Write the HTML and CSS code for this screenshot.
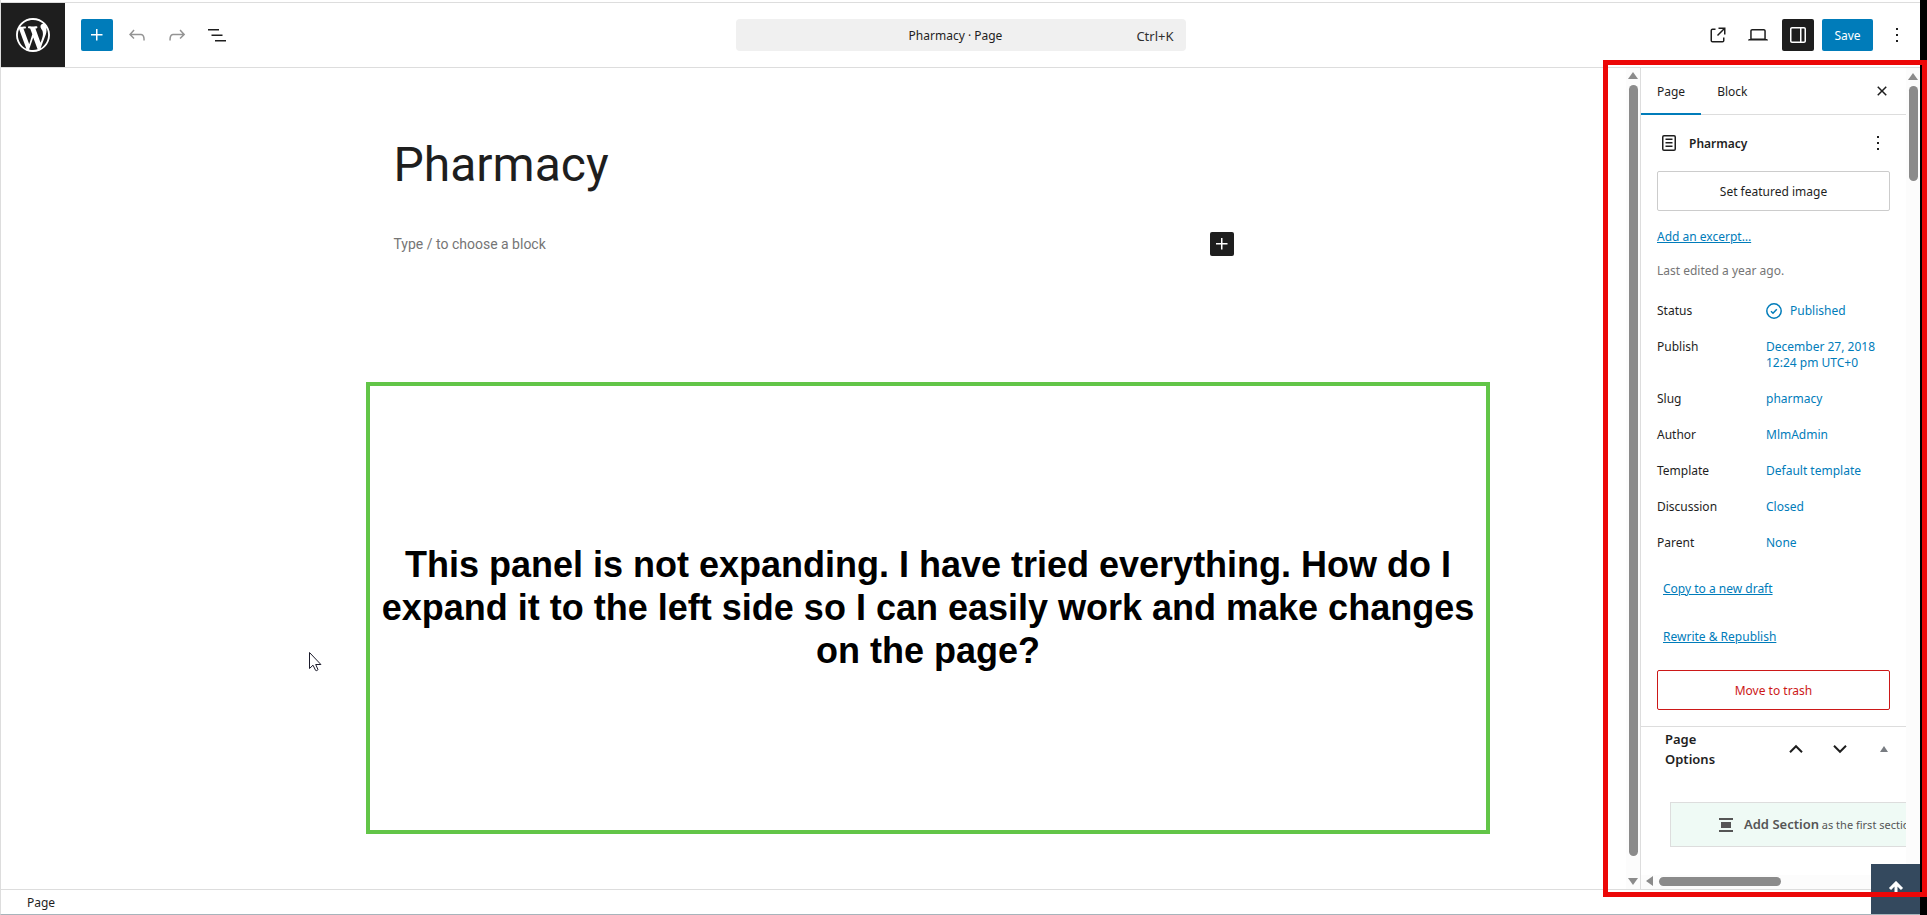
FILE: index.html
```html
<!DOCTYPE html>
<html lang="en">
<head>
    <meta charset="UTF-8">
    <meta name="viewport" content="width=device-width, initial-scale=1.0">
    <title>Pharmacy - Page</title>
    <link rel="stylesheet" href="styles.css">
</head>
<body>
    <div class="editor">
        <header class="header">
            <div class="header-left">
                <a href="#" class="logo" aria-label="View Pages">
                    <svg width="34" height="34" viewBox="0 0 20 20"><path d="M20 10c0-5.51-4.49-10-10-10C4.48 0 0 4.49 0 10c0 5.52 4.48 10 10 10 5.51 0 10-4.48 10-10zM7.78 15.37L4.37 6.22c.55-.02 1.17-.08 1.17-.08.5-.06.44-1.13-.06-1.11 0 0-1.45.11-2.37.11-.18 0-.37 0-.58-.01C4.12 2.69 6.87 1.11 10 1.11c2.33 0 4.45.87 6.05 2.34-.68-.11-1.65.39-1.65 1.58 0 .74.45 1.36.9 2.1.35.61.55 1.36.55 2.46 0 1.49-1.4 5-1.4 5l-3.03-8.37c.54-.02.82-.17.82-.17.5-.05.44-1.25-.06-1.22 0 0-1.44.12-2.38.12-.87 0-2.33-.12-2.33-.12-.5-.03-.56 1.2-.06 1.22l.92.08 1.26 3.41zM17.41 10c.24-.64.74-1.87.43-4.25.7 1.29 1.05 2.71 1.05 4.25 0 3.29-1.73 6.24-4.4 7.78.97-2.59 1.94-5.2 2.92-7.78zM6.1 18.09C3.12 16.65 1.11 13.53 1.11 10c0-1.3.23-2.48.72-3.59C3.25 10.3 4.67 14.2 6.1 18.09zm4.03-6.63l2.58 6.98c-.86.29-1.76.45-2.71.45-.79 0-1.57-.11-2.29-.33.81-2.38 1.62-4.74 2.42-7.1z"/></svg>
                </a>
                <div class="tools">
                    <button type="button" class="icon-btn primary" aria-label="Block inserter">
                        <svg width="24" height="24" viewBox="0 0 24 24"><path d="M11 12.5V17.5H12.5V12.5H17.5V11H12.5V6H11V11H6V12.5H11Z"/></svg>
                    </button>
                    <button type="button" class="icon-btn off" aria-label="Undo">
                        <svg width="24" height="24" viewBox="0 0 24 24"><path d="M18.3 11.7c-.6-.6-1.4-.9-2.3-.9H6.7l2.9-3.3-1.1-1-4.5 5L8.5 16l1-1-2.7-2.7H16c.5 0 .9.2 1.3.5 1 1 1 3.4 1 4.5v.3h1.5v-.2c0-1.5 0-4.3-1.5-5.7z"/></svg>
                    </button>
                    <button type="button" class="icon-btn off" aria-label="Redo">
                        <svg width="24" height="24" viewBox="0 0 24 24"><path d="M15.6 6.5l-1.1 1 2.9 3.3H8c-.9 0-1.7.3-2.3.9-1.4 1.5-1.4 4.2-1.4 5.6v.2h1.5v-.3c0-1.1 0-3.5 1-4.5.3-.3.7-.5 1.3-.5h9.2L14.5 15l1.1 1.1 4.6-4.6-4.6-5z"/></svg>
                    </button>
                    <button type="button" class="icon-btn" aria-label="Document overview">
                        <svg width="24" height="24" viewBox="0 0 24 24"><path d="M3 6h11v1.5H3V6Zm3.5 5.5h11V13h-11v-1.5ZM21 17H10v1.5h11V17Z"/></svg>
                    </button>
                </div>
            </div>
            <button type="button" class="command-bar">
                <span class="command-title">Pharmacy · Page</span>
                <span class="command-key">Ctrl+K</span>
            </button>
            <div class="header-right">
                <a href="#" class="icon-btn" aria-label="View page">
                    <svg width="24" height="24" viewBox="0 0 24 24"><path d="M19.5 4.5h-7V6h4.44l-5.97 5.97 1.06 1.06L18 7.06v4.44h1.5v-7Zm-13 1a2 2 0 0 0-2 2v10a2 2 0 0 0 2 2h10a2 2 0 0 0 2-2v-3H17v3a.5.5 0 0 1-.5.5h-10a.5.5 0 0 1-.5-.5v-10a.5.5 0 0 1 .5-.5h3V5.5h-3Z"/></svg>
                </a>
                <button type="button" class="icon-btn" aria-label="View">
                    <svg width="24" height="24" viewBox="0 0 24 24"><path d="M20.5 16h-.7V8c0-1.1-.9-2-2-2H6.2c-1.1 0-2 .9-2 2v8h-.7c-.8 0-1.5.7-1.5 1.5h20c0-.8-.7-1.5-1.5-1.5zM5.7 8c0-.3.2-.5.5-.5h11.6c.3 0 .5.2.5.5v7.6H5.7V8z"/></svg>
                </button>
                <button type="button" class="icon-btn pressed" aria-label="Settings">
                    <svg width="24" height="24" viewBox="0 0 24 24"><path d="M18 4H6c-1.1 0-2 .9-2 2v12c0 1.1.9 2 2 2h12c1.1 0 2-.9 2-2V6c0-1.1-.9-2-2-2zm-4 14.5H6c-.3 0-.5-.2-.5-.5V6c0-.3.2-.5.5-.5h8v13zm4.5-.5c0 .3-.2.5-.5.5h-2.5v-13H18c.3 0 .5.2.5.5v12z"/></svg>
                </button>
                <button type="button" class="save">Save</button>
                <button type="button" class="icon-btn" aria-label="Options">
                    <svg width="24" height="24" viewBox="0 0 24 24"><path d="M13 19h-2v-2h2v2zm0-6h-2v-2h2v2zm0-6h-2V5h2v2z"/></svg>
                </button>
            </div>
        </header>

        <div class="body">
            <main class="canvas">
                <div class="content">
                    <h1 class="post-title">Pharmacy</h1>
                    <div class="block-row">
                        <p class="placeholder">Type / to choose a block</p>
                        <button type="button" class="inserter" aria-label="Add block">
                            <svg width="24" height="24" viewBox="0 0 24 24"><path d="M11 12.5V17.5H12.5V12.5H17.5V11H12.5V6H11V11H6V12.5H11Z"/></svg>
                        </button>
                    </div>
                </div>
            </main>
            <div class="vscroll canvas-scroll">
                <i class="arrow up"></i>
                <div class="thumb"></div>
                <i class="arrow down"></i>
            </div>

            <aside class="sidebar">
                <div class="panel">
                    <div class="tabs">
                        <button type="button" class="tab active">Page</button>
                        <button type="button" class="tab">Block</button>
                        <button type="button" class="icon-btn close" aria-label="Close Settings">
                            <svg width="24" height="24" viewBox="0 0 24 24"><path d="M12 13.06l3.712 3.713 1.061-1.06L13.061 12l3.712-3.712-1.06-1.06L12 10.938 8.288 7.227l-1.061 1.06L10.939 12l-3.712 3.712 1.06 1.061L12 13.061z"/></svg>
                        </button>
                    </div>

                    <section class="summary">
                        <div class="card">
                            <svg width="24" height="24" viewBox="0 0 24 24"><path d="M15.5 7.5h-7V9h7V7.5Zm-7 3.5h7v1.5h-7V11Zm7 3.5h-7V16h7v-1.5Z"/><path d="M17 4H7a2 2 0 0 0-2 2v12a2 2 0 0 0 2 2h10a2 2 0 0 0 2-2V6a2 2 0 0 0-2-2ZM7 5.5h10a.5.5 0 0 1 .5.5v12a.5.5 0 0 1-.5.5H7a.5.5 0 0 1-.5-.5V6a.5.5 0 0 1 .5-.5Z"/></svg>
                            <h2>Pharmacy</h2>
                            <button type="button" class="card-more" aria-label="Actions">
                                <svg width="24" height="24" viewBox="0 0 24 24"><path d="M13 19h-2v-2h2v2zm0-6h-2v-2h2v2zm0-6h-2V5h2v2z"/></svg>
                            </button>
                        </div>
                        <button type="button" class="wide-btn">Set featured image</button>
                        <a href="#" class="excerpt">Add an excerpt…</a>
                        <p class="edited">Last edited a year ago.</p>
                        <dl class="rows">
                            <dt>Status</dt>
                            <dd>
                                <a href="#" class="status">
                                    <svg width="16" height="16" viewBox="0 0 16 16"><circle cx="8" cy="8" r="7.2"/><path d="M5 8.3l2 1.9 3.8-4"/></svg>
                                    Published
                                </a>
                            </dd>
                            <dt>Publish</dt>
                            <dd><a href="#">December 27, 2018<br>12:24 pm UTC+0</a></dd>
                            <dt>Slug</dt>
                            <dd><a href="#">pharmacy</a></dd>
                            <dt>Author</dt>
                            <dd><a href="#">MlmAdmin</a></dd>
                            <dt>Template</dt>
                            <dd><a href="#">Default template</a></dd>
                            <dt>Discussion</dt>
                            <dd><a href="#">Closed</a></dd>
                            <dt>Parent</dt>
                            <dd><a href="#">None</a></dd>
                        </dl>
                        <div class="links">
                            <a href="#">Copy to a new draft</a>
                            <a href="#">Rewrite &amp; Republish</a>
                        </div>
                        <button type="button" class="wide-btn danger">Move to trash</button>
                    </section>

                    <section class="metabox">
                        <div class="metabox-head">
                            <h2>Page Options</h2>
                            <button type="button" class="move" aria-label="Move up">
                                <svg width="14" height="10" viewBox="0 0 14 10"><path d="M1 8.2l6-6 6 6"/></svg>
                            </button>
                            <button type="button" class="move" aria-label="Move down">
                                <svg width="14" height="10" viewBox="0 0 14 10"><path d="M1 1.8l6 6 6-6"/></svg>
                            </button>
                            <button type="button" class="move" aria-label="Toggle panel"><i class="toggle"></i></button>
                        </div>
                        <button type="button" class="add-section">
                            <svg width="14" height="14" viewBox="0 0 14 14"><path d="M0 0h14v2H0zM2 4h10v6H2zM0 12h14v2H0z"/></svg>
                            <span><b>Add Section</b> as the first section</span>
                        </button>
                    </section>
                </div>
                <div class="vscroll side-scroll">
                    <i class="arrow up"></i>
                    <div class="thumb"></div>
                </div>
                <div class="hscroll">
                    <i class="arrow left"></i>
                    <div class="thumb"></div>
                </div>
            </aside>
        </div>

        <footer class="footer">Page</footer>

        <button type="button" class="to-top" aria-label="Back to top">
            <svg width="16" height="16" viewBox="0 0 16 16"><path d="M8 15V2M2 8l6-6 6 6"/></svg>
        </button>
    </div>

    <!-- notes drawn over the editor -->
    <div class="note">This panel is not expanding. I have tried everything. How do I expand it to the left side so I can easily work and make changes on the page?</div>
    <div class="highlight"></div>
    <svg class="cursor" width="14" height="20" viewBox="0 0 14 20"><path d="M.5.5v16l3.500-3.300 2.600 5.200c.8.600 2.400 0 2.300-1L6.700 12.500h5.200z"/></svg>
</body>
</html>
```

FILE: styles.css
```css
*{
    box-sizing: border-box;
}
body{
    margin: 0;
    height: 100vh;
    position: relative;
    background-color: #000;
    font-family: "Segoe UI", "Noto Sans", sans-serif;
    font-size: 12px;
    line-height: 16px;
    color: #1e1e1e;
}
button{
    padding: 0;
    border: 0;
    background: none;
    font: inherit;
    color: inherit;
    cursor: pointer;
}
a{
    color: #007cba;
}
h1, h2, p, dl, dd{
    margin: 0;
}
svg{
    display: block;
    flex: none;
    fill: currentColor;
}
.editor{
    height: 100%;
    margin-right: 7px;
    padding-top: 2px;
    display: flex;
    flex-direction: column;
    position: relative;
    background-color: #fff;
    border-left: 1px solid #ddd;
    border-bottom: 1px solid #a7b4bb;
}

/* top bar */
.header{
    display: grid;
    grid-template-columns: 1fr 450px 1fr;
    align-items: center;
    border-top: 1px solid #ddd;
    border-bottom: 1px solid #ddd;
}
.header-left, .tools, .header-right{
    display: flex;
    align-items: center;
}
.logo{
    width: 64px;
    height: 64px;
    display: flex;
    align-items: center;
    justify-content: center;
    background-color: #1e1e1e;
    color: #fff;
}
.tools{
    gap: 8px;
    padding-left: 16px;
}
.header-right{
    gap: 8px;
    justify-content: flex-end;
    padding-right: 7px;
}
.icon-btn{
    width: 32px;
    height: 32px;
    display: flex;
    align-items: center;
    justify-content: center;
    border-radius: 2px;
    color: #1e1e1e;
}
.icon-btn.primary{
    background-color: #007cba;
    color: #fff;
}
.icon-btn.off{
    color: #949494;
}
.icon-btn.pressed{
    background-color: #1e1e1e;
    color: #fff;
}
.save{
    height: 32px;
    min-width: 51px;
    padding: 2px 12px 0;
    border-radius: 2px;
    background-color: #007cba;
    color: #fff;
}
.command-bar{
    height: 32px;
    padding: 2px 12px 0 2px;
    display: grid;
    grid-template-columns: 1fr auto 1fr;
    align-items: center;
    border-radius: 4px;
    background-color: #f0f0f0;
}
.command-title{
    grid-column: 2;
}
.command-key{
    text-align: right;
    font-size: 13px;
    color: #2f2f2f;
}

/* canvas */
.body{
    flex: 1;
    min-height: 0;
    display: flex;
}
.canvas{
    flex: 1;
    padding-top: 69px;
    font-family: Roboto, sans-serif;
}
.content{
    max-width: 840px;
    margin: 0 auto;
}
.post-title{
    font-size: 48px;
    line-height: 56px;
    font-weight: 400;
}
.block-row{
    display: flex;
    align-items: center;
    justify-content: space-between;
    margin-top: 39px;
}
.placeholder{
    font-size: 14px;
    color: #757575;
}
.inserter{
    width: 24px;
    height: 24px;
    border-radius: 2px;
    background-color: #1e1e1e;
    color: #fff;
}

/* scrollbars */
.vscroll{
    width: 14px;
    display: flex;
    flex-direction: column;
    align-items: center;
    gap: 6px;
    padding: 4px 0;
    background-color: #fcfcfc;
}
.thumb{
    border-radius: 5px;
    background-color: #8b8b8b;
}
.vscroll .thumb{
    width: 9px;
}
.canvas-scroll .thumb{
    flex: 1;
    margin-bottom: 16px;
}
.side-scroll .thumb{
    height: 95px;
}
.arrow{
    border: 5px solid transparent;
}
.arrow.up{
    border-top: 0;
    border-bottom: 7px solid #8b8b8b;
}
.arrow.down{
    border-bottom: 0;
    border-top: 7px solid #8b8b8b;
}
.arrow.left{
    border-left: 0;
    border-right: 7px solid #8b8b8b;
}
.hscroll{
    grid-column: 1 / 3;
    display: flex;
    align-items: center;
    gap: 6px;
    padding: 0 5px 2px;
    background-color: #fcfcfc;
}
.hscroll .thumb{
    width: 122px;
    height: 9px;
}

/* settings sidebar */
.sidebar{
    width: 280px;
    display: grid;
    grid-template-columns: 1fr 14px;
    grid-template-rows: 1fr 14px;
    border-left: 1px solid #ddd;
}
.panel{
    min-width: 0;
    min-height: 0;
    overflow: hidden;
}
.side-scroll{
    padding-top: 5px;
}
.tabs{
    height: 47px;
    display: flex;
    border-bottom: 1px solid #ddd;
}
.tab{
    padding: 0 16px;
    height: 47px;
}
.tab.active{
    border-bottom: 2px solid #007cba;
    padding-top: 2px;
}
.close{
    margin: 7px 8px 0 auto;
}
.summary{
    padding: 16px;
    display: flex;
    flex-direction: column;
}
.card{
    display: flex;
    align-items: center;
    gap: 8px;
}
.card h2{
    flex: 1;
    padding-top: 2px;
    font-size: 12px;
    font-weight: 600;
}
.wide-btn{
    height: 40px;
    padding-top: 2px;
    border: 1px solid #ccc;
    border-radius: 2px;
}
.card + .wide-btn{
    margin-top: 16px;
}
.excerpt{
    align-self: flex-start;
    margin-top: 18px;
}
.edited{
    margin-top: 18px;
    color: #757575;
}
.rows{
    margin-top: 16px;
    display: grid;
    grid-template-columns: 93px 1fr;
    row-gap: 4px;
    column-gap: 16px;
}
.rows dt, .rows dd{
    padding: 8px 0;
}
.rows a{
    text-decoration: none;
}
.rows .status{
    display: flex;
    gap: 8px;
}
.status svg{
    fill: none;
    stroke: currentColor;
    stroke-width: 1.5;
}
.links{
    display: flex;
    flex-direction: column;
    align-items: flex-start;
    gap: 32px;
    padding: 22px 6px 25px;
}
.danger{
    border-color: #cc1818;
    color: #cc1818;
}
.metabox{
    border-top: 1px solid #ddd;
}
.metabox-head{
    display: flex;
    align-items: center;
    padding-left: 24px;
}
.metabox-head h2{
    flex: 1;
    padding-right: 30px;
    font-size: 13px;
    line-height: 20px;
    font-weight: 600;
}
.move{
    width: 44px;
    height: 44px;
    display: flex;
    align-items: center;
    justify-content: center;
}
.move svg{
    fill: none;
    stroke: currentColor;
    stroke-width: 2;
}
.toggle{
    border: 4px solid transparent;
    border-top: 0;
    border-bottom: 6px solid #787c82;
}
.add-section{
    width: 340px;
    height: 45px;
    margin: 31px 0 0 29px;
    padding-left: 48px;
    display: flex;
    align-items: center;
    gap: 11px;
    border: 1px solid #ddd;
    background-color: #effaf5;
    color: #555;
    font-size: 11px;
}
.add-section b{
    font-size: 13px;
    font-weight: 600;
}

.footer{
    height: 25px;
    padding: 5px 26px 0;
    border-top: 1px solid #ddd;
}
.to-top{
    position: absolute;
    right: 0;
    bottom: 0;
    width: 49px;
    height: 50px;
    display: flex;
    align-items: center;
    justify-content: center;
    background-color: #34495e;
    color: #fff;
}
.to-top svg{
    fill: none;
    stroke: currentColor;
    stroke-width: 3;
}

/* notes */
.note{
    position: absolute;
    left: 366px;
    top: 382px;
    width: 1124px;
    height: 452px;
    padding: 0 4px 2px;
    display: flex;
    align-items: center;
    text-align: center;
    border: 4px solid #62c548;
    font-family: "Liberation Sans", Arial, sans-serif;
    font-size: 36px;
    line-height: 43px;
    font-weight: 700;
    color: #000;
}
.highlight{
    position: absolute;
    left: 1603px;
    right: 0;
    top: 60px;
    bottom: 18px;
    border: 5px solid #ec0707;
}
.cursor{
    position: absolute;
    left: 309px;
    top: 652px;
    fill: #fff;
    stroke: #1b1b2b;
}
```
